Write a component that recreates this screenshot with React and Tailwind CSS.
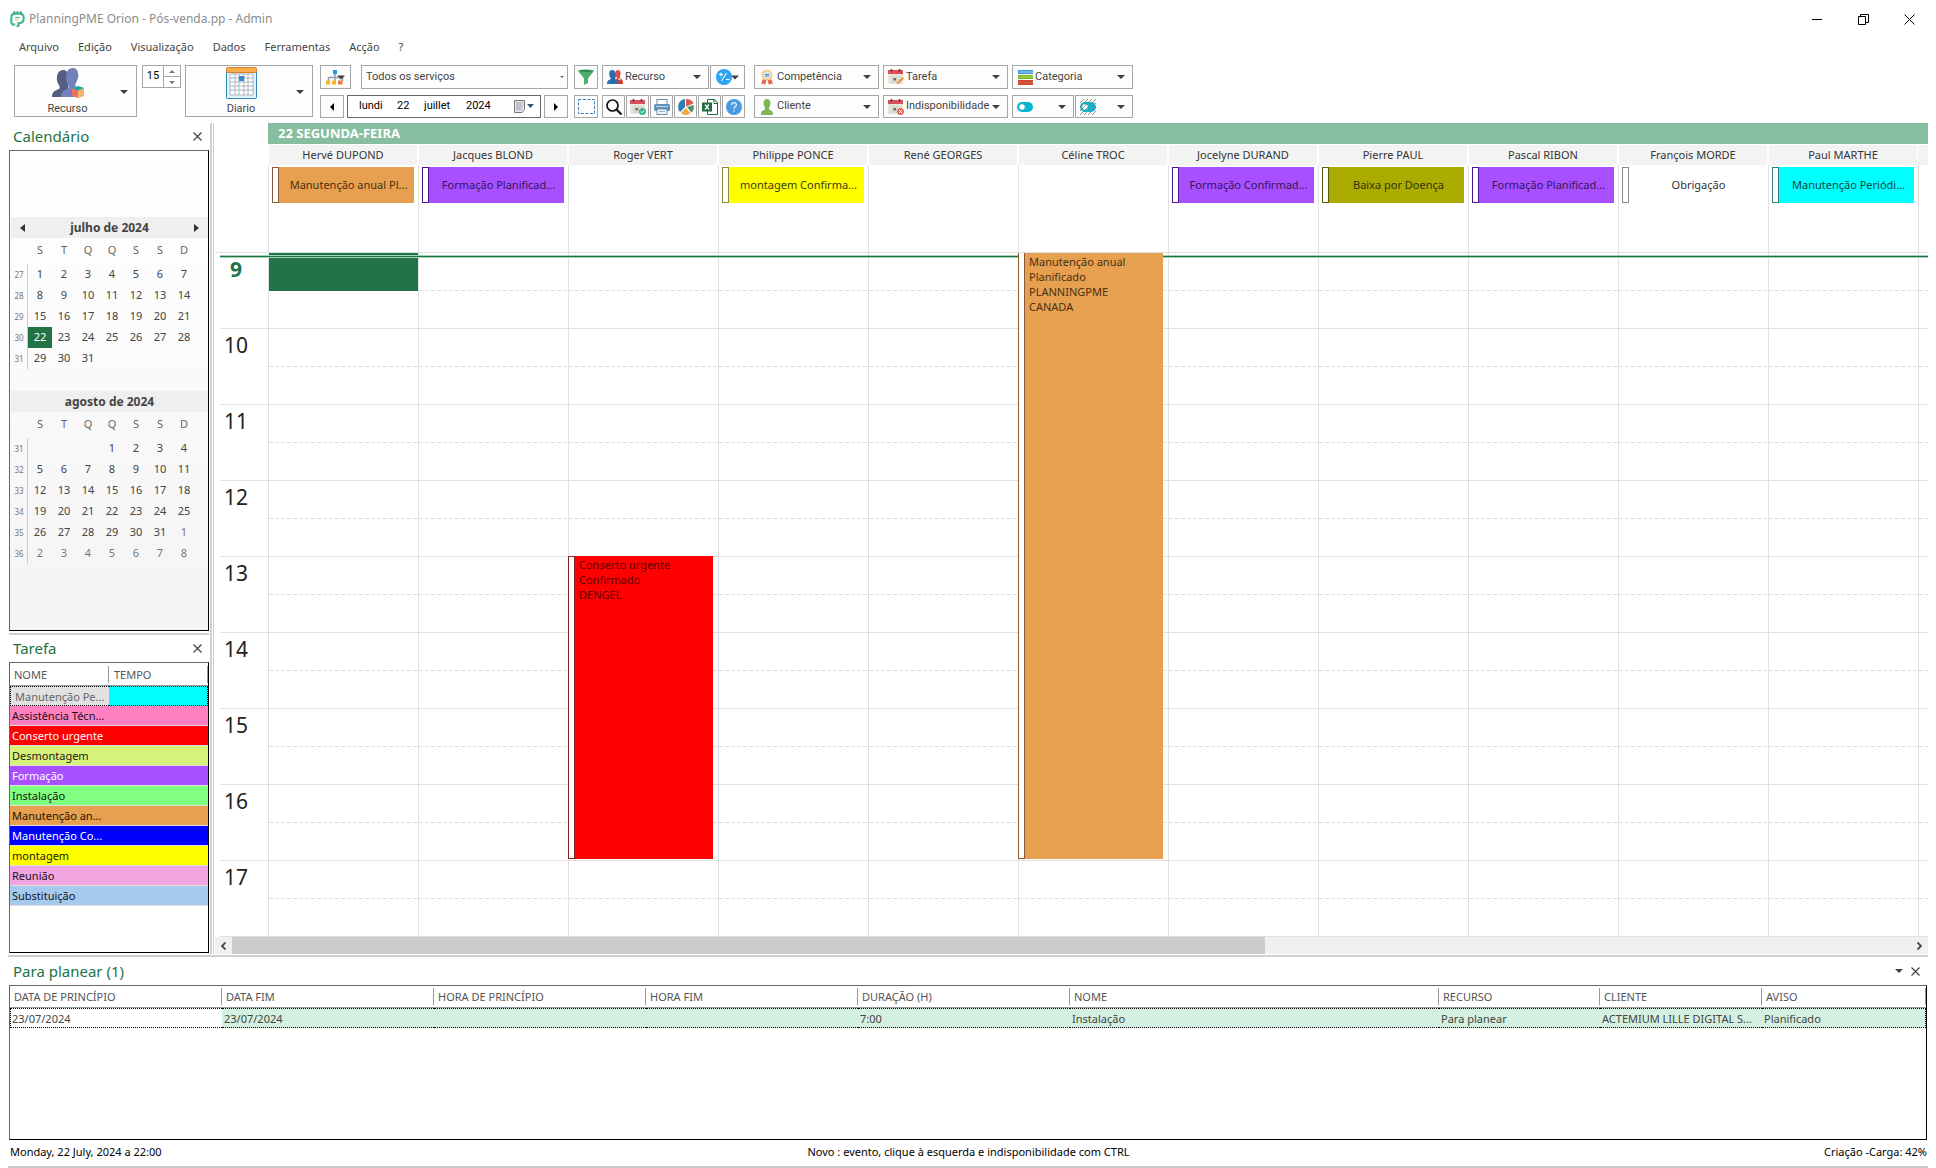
import React from 'react';

const resources = [
    { name: 'Hervé DUPOND', allDay: { text: 'Manutenção anual Pl...', body: 'bg-[#e6a050] text-[#4a3010]', mark: 'border-[#8a5a35]' } },
    { name: 'Jacques BLOND', allDay: { text: 'Formação Planificad...', body: 'bg-[#a850ff] text-[#34155a]', mark: 'border-[#4b1590]' } },
    { name: 'Roger VERT' },
    { name: 'Philippe PONCE', allDay: { text: 'montagem Confirma...', body: 'bg-[#ffff00] text-[#3a3a10]', mark: 'border-[#8a8a40]' } },
    { name: 'René GEORGES' },
    { name: 'Céline TROC' },
    { name: 'Jocelyne DURAND', allDay: { text: 'Formação Confirmad...', body: 'bg-[#a850ff] text-[#34155a]', mark: 'border-[#4b1590]' } },
    { name: 'Pierre PAUL', allDay: { text: 'Baixa por Doença', body: 'bg-[#acac00] text-[#33330a]', mark: 'border-[#5c5c10]' } },
    { name: 'Pascal RIBON', allDay: { text: 'Formação Planificad...', body: 'bg-[#a850ff] text-[#34155a]', mark: 'border-[#4b1590]' } },
    { name: 'François MORDE', allDay: { text: 'Obrigação', body: 'bg-white text-[#333333]', mark: 'border-[#8c8c8c]' } },
    { name: 'Paul MARTHE', allDay: { text: 'Manutenção Periódi...', body: 'bg-[#00ffff] text-[#104545]', mark: 'border-[#308080]' } },
];

const hours = [9, 10, 11, 12, 13, 14, 15, 16, 17];

const months = [
    {
        title: 'julho de 2024',
        arrows: true,
        weeks: [
            [27, 1, 2, 3, 4, 5, 6, 7],
            [28, 8, 9, 10, 11, 12, 13, 14],
            [29, 15, 16, 17, 18, 19, 20, 21],
            [30, 22, 23, 24, 25, 26, 27, 28],
            [31, 29, 30, 31, '', '', '', ''],
        ],
    },
    {
        title: 'agosto de 2024',
        weeks: [
            [31, '', '', '', 1, 2, 3, 4],
            [32, 5, 6, 7, 8, 9, 10, 11],
            [33, 12, 13, 14, 15, 16, 17, 18],
            [34, 19, 20, 21, 22, 23, 24, 25],
            [35, 26, 27, 28, 29, 30, 31, 1],
            [36, 2, 3, 4, 5, 6, 7, 8],
        ],
    },
];

const tasks = [
    { name: 'Assistência Técn...', style: 'bg-[#ff80c0] text-[#221018]' },
    { name: 'Conserto urgente', style: 'bg-[#ff0000] text-white' },
    { name: 'Desmontagem', style: 'bg-[#d7f27a] text-[#1c2010]' },
    { name: 'Formação', style: 'bg-[#a850ff] text-white' },
    { name: 'Instalação', style: 'bg-[#80ff80] text-[#102010]' },
    { name: 'Manutenção an...', style: 'bg-[#e6a050] text-[#201508]' },
    { name: 'Manutenção Co...', style: 'bg-[#0000ff] text-white' },
    { name: 'montagem', style: 'bg-[#ffff00] text-[#202008]' },
    { name: 'Reunião', style: 'bg-[#f0a5e0] text-[#201020]' },
    { name: 'Substituição', style: 'bg-[#a6c9ee] text-[#101820]' },
];

const planColumns = [
    { label: 'DATA DE PRINCÍPIO', width: 'w-[212px]', value: '23/07/2024' },
    { label: 'DATA FIM', width: 'w-[212px]', value: '23/07/2024' },
    { label: 'HORA DE PRINCÍPIO', width: 'w-[212px]', value: '' },
    { label: 'HORA FIM', width: 'w-[212px]', value: '' },
    { label: 'DURAÇÃO (H)', width: 'w-[212px]', value: '7:00' },
    { label: 'NOME', width: 'w-[369px]', value: 'Instalação' },
    { label: 'RECURSO', width: 'w-[161px]', value: 'Para planear' },
    { label: 'CLIENTE', width: 'w-[162px]', value: 'ACTEMIUM LILLE DIGITAL S...' },
    { label: 'AVISO', width: '', value: 'Planificado' },
];

/* Icons */

const Caret = ({ className = '' }) => (
    <svg className={`h-[4px] w-[8px] shrink-0 ${className}`} viewBox="0 0 8 4">
        <path d="M0 0h8L4 4z" fill="#404040" />
    </svg>
);

const CloseIcon = () => (
    <svg className="h-[9px] w-[9px]" viewBox="0 0 9 9">
        <path d="M.5.5l8 8M8.500.5l-8 8" stroke="#444" strokeWidth="1.2" />
    </svg>
);

const Logo = () => (
    <svg className="h-4 w-[15px]" viewBox="0 0 15 16">
        <path d="M5.200 13.600H3.400C1.800 13.600 1.300 12 1.300 10V6.500C1.300 4 2.800 2.700 5 2.700h4.500c2.600 0 4.200 2 4.200 4.600 0 2.800-1.800 4.700-4.400 4.700H8.600v2.300c0 .8-1.200 1-2 .6" fill="none" stroke="#41bb8b" strokeWidth="2.200" />
        <rect x="3.500" y="0" width="1.600" height="3" rx=".8" fill="#2f9d74" />
        <rect x="6.700" y="0" width="1.600" height="3" rx=".8" fill="#2f9d74" />
        <rect x="9.900" y="0" width="1.600" height="3" rx=".8" fill="#2f9d74" />
        <path d="M5 6.500h5" stroke="#3fb98a" strokeWidth="1" />
        <path d="M5 8.800h3.500" stroke="#e8b04a" strokeWidth="1" />
    </svg>
);

const PeopleIcon = () => (
    <svg className="h-8 w-8" viewBox="0 0 32 32">
        <path d="M0 29c0-5 2-6 7-8 1-1 1-2 0-4-3-3-3-12 1-14 3-2 8-1 8 4v22z" fill="#535f80" />
        <path d="M9 29c0-5 2-6 6-8 2-1 2-3 0-6-2-4-1-12 2-14 4-2 9-1 9 5 1 4-1 6-2 9-1 2-1 4 1 5 4 2 5 4 5 9z" fill="#7480bd" />
        <path d="M20 20l6 2v8l-6-2z" fill="#ef6f61" />
        <path d="M32 20l-6 2v8l6-2z" fill="#f9b26c" />
        <path d="M20 20l6-2 6 2-6 2.500z" fill="#12a89d" />
    </svg>
);

const BigCalendarIcon = () => (
    <svg className="h-8 w-[31px]" viewBox="0 0 31 32">
        <rect x=".5" y="4" width="30" height="27.500" rx="1" fill="#dff3fb" stroke="#2f88b8" />
        <rect x="4" y="7" width="23" height="21.500" fill="#fff" />
        <path d="M4 7h23M4 11h23M4 15h23M4 19h23M4 23h23M4 28h23M4 7v21M9 7v21M13 7v21M18 7v21M22 7v21M27 7v21" stroke="#a9b4bc" />
        <rect x="13" y="9" width="5" height="5" fill="#3d86cf" />
        <rect x=".5" y=".5" width="30" height="5" rx="1" fill="#f6ad4b" stroke="#d9822b" />
    </svg>
);

const OrgIcon = () => (
    <svg className="h-[15px] w-[20px]" viewBox="0 0 20 15">
        <path d="M9 4v3M2.500 11V7.500h14V11M9 7v4" fill="none" stroke="#90a0b0" strokeWidth="1.500" />
        <rect x="7" y="0" width="4" height="4" fill="#2196e3" />
        <rect x="0" y="10.500" width="4" height="4" fill="#f9b425" />
        <rect x="6" y="10.500" width="4" height="4" fill="#f9b425" />
        <rect x="12" y="10.500" width="4.500" height="4" fill="#f07c3c" />
        <path d="M11 5.500h8l-4 4z" fill="#404040" />
    </svg>
);

const FunnelIcon = () => (
    <svg className="h-4 w-4" viewBox="0 0 16 16">
        <path d="M0 2c0-2 16-2 16 0L10 9.500V14l-4 2V9.500z" fill="#4caf6d" />
        <ellipse cx="8" cy="2" rx="6.500" ry="1.100" fill="#2e8b50" />
    </svg>
);

const ResourceIcon = () => (
    <svg className="h-4 w-4" viewBox="0 0 16 16">
        <path d="M7 15c0-4 1-5 3-5l-1-3c0-3-1-6 2-6s3 4 2 7c0 1 0 2 1 2 2 1 2 2 2 5z" fill="#e04f42" />
        <path d="M9 10h6v5H9z" fill="#c43a3a" />
        <path d="M10 10l3-1 2 1-2 1.500z" fill="#f4b8a0" />
        <path d="M0 15c0-3 1-4 4-5C2 7 1 1 5 1s5 5 3 9c1.500 1 2.500 2 3 5z" fill="#2c6db0" />
    </svg>
);

const PercentIcon = () => (
    <svg className="h-4 w-[23px]" viewBox="0 0 23 16">
        <circle cx="8" cy="8" r="8" fill="#2ba4f4" />
        <path d="M3 5.500h4M5 3.500v4M10 10.500h3.500M5.500 12l5-8" stroke="#fff" strokeWidth="1.100" />
        <path d="M15 6.500h8l-4 4z" fill="#404040" />
    </svg>
);

const MarqueeIcon = () => (
    <svg className="h-[15px] w-[17px]" viewBox="0 0 17 15">
        <rect x=".5" y=".5" width="16" height="14" fill="none" stroke="#3c7fc0" strokeDasharray="3 1.500" />
    </svg>
);

const SearchIcon = () => (
    <svg className="h-4 w-4" viewBox="0 0 16 16">
        <circle cx="6.500" cy="6.500" r="5.500" fill="none" stroke="#111" strokeWidth="1.700" />
        <path d="M10.500 10.500L15.500 15.500" stroke="#111" strokeWidth="2.200" />
    </svg>
);

// One calendar sheet, with a different badge in the lower right corner
const SheetIcon = ({ badge }) => (
    <svg className="h-4 w-4" viewBox="0 0 16 16">
        <rect x="0" y="1" width="15" height="14" fill="#e9e6dc" />
        <rect x="0" y="1" width="15" height="4" fill="#d94f5c" />
        <path d="M3.500 0v2.500M11.500 0v2.500" stroke="#4a3b48" strokeWidth="1.500" />
        <path d="M2 8h11M2 10.500h11M2 13h11M5 6v8M8.500 6v8" stroke="#d3d0c6" />
        <rect x="5.500" y="9" width="2.500" height="2.500" fill="#6d6a66" />
        {badge === 'check' && (
            <>
                <circle cx="12.500" cy="12.500" r="3.500" fill="#3cb98c" />
                <path d="M11 12.500l1.200 1.200 2-2.200" fill="none" stroke="#fff" />
            </>
        )}
        {badge === 'pencil' && <path d="M8.500 15.500l.8-2.500L14.500 8l1.500 1.500-5 5z" fill="#e8963c" />}
        {badge === 'cross' && (
            <>
                <circle cx="12.500" cy="12.500" r="3.500" fill="#e8695c" />
                <path d="M11 11l3 3M14 11l-3 3" stroke="#fff" />
            </>
        )}
    </svg>
);

const PrinterIcon = () => (
    <svg className="h-4 w-4" viewBox="0 0 16 16">
        <rect x="3" y="0.500" width="10" height="6" fill="#fff" stroke="#6c8ba5" />
        <rect x="0" y="5" width="16" height="7" rx="1.500" fill="#5d93bf" />
        <path d="M2 7.500h12" stroke="#bcd6ea" />
        <rect x="3" y="10" width="10" height="5.500" fill="#f2f7fb" stroke="#6c8ba5" />
        <path d="M5 12.500h6" stroke="#8eb4d4" />
    </svg>
);

const PieIcon = () => (
    <svg className="h-4 w-4" viewBox="0 0 16 16">
        <path d="M7 8V0A8 8 0 0 0 2 13z" fill="#2d7fb8" />
        <path d="M8 9L3 14a8 8 0 0 0 9.500.500z" fill="#f2a73b" />
        <path d="M9 8l4.500 5.800A8 8 0 0 0 15.500 6z" fill="#4f8f6a" />
        <path d="M8 7.500l7.500-3A8 8 0 0 0 8 0z" fill="#e0564a" />
    </svg>
);

const ExcelIcon = () => (
    <svg className="h-4 w-4" viewBox="0 0 16 16">
        <path d="M5.500.5h7L15.500 4v11.500h-10z" fill="#fff" stroke="#1e6e42" />
        <path d="M12 .5V4.500h3.500" fill="none" stroke="#1e6e42" />
        <rect x="0" y="3.500" width="10" height="9" fill="#1e6e42" />
        <path d="M3 5.500l4 5M7 5.500l-4 5" stroke="#fff" strokeWidth="1.300" />
    </svg>
);

const HelpIcon = () => (
    <svg className="h-4 w-4" viewBox="0 0 16 16">
        <circle cx="8" cy="8" r="8" fill="#4a9ce0" />
        <path d="M5.800 6c0-3.200 4.600-3 4.600-.3C10.400 7.500 8 7.500 8 9.800M8 11.300v1.400" fill="none" stroke="#e8f3fc" strokeWidth="1.300" />
    </svg>
);

const MedalIcon = () => (
    <svg className="h-4 w-4" viewBox="0 0 16 16">
        <path d="M4 10l-2 5 2.500-.5L6 16l1.500-5zM12 10l2 5-2.500-.5L10 16l-1.500-5z" fill="#e5604a" />
        <circle cx="8" cy="6" r="5.500" fill="#f3cf8e" />
        <circle cx="8" cy="6" r="3.500" fill="#dbe8f4" />
        <path d="M6 5.500h4M6 7h4" stroke="#5b86b8" />
    </svg>
);

const ClientIcon = () => (
    <svg className="mr-[2px] h-4 w-3" viewBox="0 0 12 16">
        <path d="M0 16c0-4 1-4 4-5.500V9C2 6 1.500 0 6 0s4 6 2 9v1.500c3 1.500 4 1.500 4 5.500z" fill="#7cb852" />
    </svg>
);

const StackIcon = () => (
    <svg className="h-[15px] w-[15px]" viewBox="0 0 15 15">
        <rect width="15" height="4" fill="#3f97d6" />
        <path d="M1 2h14" stroke="#a9d3ee" />
        <rect y="5" width="15" height="4" fill="#7ab51d" />
        <path d="M1 7h14" stroke="#c0dd77" />
        <rect y="10" width="15" height="5" fill="#d9472f" />
        <path d="M1 12.500h14" stroke="#b0705c" />
    </svg>
);

const ToggleIcon = ({ hatched }) => (
    <svg className="h-4 w-4" viewBox="0 0 16 16">
        <rect x="0" y="3" width="16" height="10" rx="5" fill="#08b6d2" />
        <circle cx="5" cy="8" r="2.800" fill="#fff" />
        {hatched && <path d="M0 4l4-4M0 8l8-8M0 12L12 0M0 16L16 0M4 16L16 4M8 16l8-8M12 16l4-4" stroke="#6f8a8a" strokeWidth=".9" />}
    </svg>
);

const DateDropIcon = () => (
    <svg className="h-[13px] w-[21px]" viewBox="0 0 21 13">
        <path d="M.5.500h10v9l-2.500 3H.5z" fill="#e4e4ea" stroke="#777" />
        <path d="M2 3h7M2 5h7M2 7h7M2 9h6M3.500 2v9M6 2v9" stroke="#a2a2b4" strokeWidth=".7" />
        <path d="M13 4h7l-3.500 4z" fill="#3c4f78" />
    </svg>
);

/* Toolbar parts */

const toolBox = 'flex items-center border border-[#a6a6a6] bg-[#fdfdfd]';

const IconButton = ({ label, className, children }) => (
    <button type="button" aria-label={label} className={`${toolBox} justify-center ${className}`}>
        {children}
    </button>
);

const ToolSelect = ({ label, icon, width, height = 'h-[23px]', text = true }) => (
    <div className={`${toolBox} relative ${width} ${height}`}>
        <span className="flex w-5 shrink-0 justify-end">{icon}</span>
        <select aria-label={label} className="absolute inset-0 appearance-none pl-[22px] text-[11px] text-[#444444] outline-none">
            <option>{text ? label : ''}</option>
        </select>
        <Caret className="absolute right-[7px]" />
    </div>
);

const Toolbar = () => (
    <div className="flex h-[58px] items-start pl-[14px] font-['Roboto',sans-serif] text-[11px] text-[#444444]">
        <button type="button" className={`${toolBox} relative h-[52px] w-[123px] flex-col justify-between pt-[2px] pr-[16px] leading-[15px]`}>
            <PeopleIcon />
            Recurso
            <Caret className="absolute top-[24px] right-[8px]" />
        </button>

        <div className="ml-[5px] flex h-[23px] w-[39px] border border-[#a6a6a6]">
            <input aria-label="Intervalo" defaultValue="15" className="w-[21px] border-r border-[#a6a6a6] text-center text-black outline-none" />
            <div className="flex flex-1 flex-col divide-y divide-[#a6a6a6]">
                <button type="button" aria-label="Aumentar" className="flex flex-1 items-center justify-center">
                    <svg className="h-[3px] w-[6px]" viewBox="0 0 6 3"><path d="M0 3h6L3 0z" fill="#777" /></svg>
                </button>
                <button type="button" aria-label="Diminuir" className="flex flex-1 items-center justify-center">
                    <svg className="h-[3px] w-[6px]" viewBox="0 0 6 3"><path d="M0 0h6L3 3z" fill="#777" /></svg>
                </button>
            </div>
        </div>

        <button type="button" className={`${toolBox} relative ml-1 h-[52px] w-[128px] flex-col justify-between pt-px pr-[16px] leading-[15px]`}>
            <BigCalendarIcon />
            Diario
            <Caret className="absolute top-[24px] right-[8px]" />
        </button>

        {/* Service and date */}
        <div className="ml-[7px] flex w-[248px] flex-col gap-[6px]">
            <div className="flex justify-between">
                <IconButton label="Organização" className="h-6 w-[31px]"><OrgIcon /></IconButton>
                <div className={`${toolBox} relative h-6 w-[207px]`}>
                    <select aria-label="Serviços" className="h-full w-full appearance-none pl-1 outline-none">
                        <option>Todos os serviços</option>
                    </select>
                    <svg className="absolute right-[3px] h-[2px] w-1" viewBox="0 0 4 2"><path d="M0 0h4L2 2z" fill="#666" /></svg>
                </div>
            </div>
            <div className="flex justify-between">
                <IconButton label="Dia anterior" className="h-[23px] w-6">
                    <svg className="h-2 w-1" viewBox="0 0 4 8"><path d="M4 0v8L0 4z" /></svg>
                </IconButton>
                <div className="flex h-[23px] w-[194px] items-center border border-[#666666] pl-[11px] text-black">
                    <input aria-label="Dia da semana" defaultValue="lundi" className="w-[38px] outline-none" />
                    <input aria-label="Dia" defaultValue="22" className="w-[27px] outline-none" />
                    <input aria-label="Mês" defaultValue="juillet" className="w-[42px] outline-none" />
                    <input aria-label="Ano" defaultValue="2024" className="w-[48px] outline-none" />
                    <button type="button" aria-label="Abrir calendário"><DateDropIcon /></button>
                </div>
                <IconButton label="Dia seguinte" className="h-[23px] w-6">
                    <svg className="h-2 w-1" viewBox="0 0 4 8"><path d="M0 0v8l4-4z" /></svg>
                </IconButton>
            </div>
        </div>

        {/* Filter and tools */}
        <div className="ml-[6px] flex flex-col gap-[6px]">
            <div className="flex">
                <IconButton label="Filtro" className="h-6 w-6"><FunnelIcon /></IconButton>
                <div className="ml-1 flex gap-px">
                    <ToolSelect label="Recurso" icon={<ResourceIcon />} width="w-[107px]" height="h-6" />
                    <IconButton label="Cálculo" className="h-6 w-[35px]"><PercentIcon /></IconButton>
                </div>
            </div>
            <div className="flex">
                <IconButton label="Seleção" className="h-[23px] w-6"><MarqueeIcon /></IconButton>
                <div className="ml-1 flex gap-px">
                    <IconButton label="Procurar" className="h-[23px] w-[23px]"><SearchIcon /></IconButton>
                    <IconButton label="Marcações" className="h-[23px] w-[23px]"><SheetIcon badge="check" /></IconButton>
                    <IconButton label="Imprimir" className="h-[23px] w-[23px]"><PrinterIcon /></IconButton>
                    <IconButton label="Estatísticas" className="h-[23px] w-[23px]"><PieIcon /></IconButton>
                    <IconButton label="Exportar" className="h-[23px] w-[23px]"><ExcelIcon /></IconButton>
                    <IconButton label="Ajuda" className="h-[23px] w-[23px]"><HelpIcon /></IconButton>
                </div>
            </div>
        </div>

        {/* Quick filters */}
        <div className="ml-[9px] flex flex-col gap-[6px]">
            <div className="flex gap-1">
                <ToolSelect label="Competência" icon={<MedalIcon />} width="w-[125px]" height="h-6" />
                <ToolSelect label="Tarefa" icon={<SheetIcon badge="pencil" />} width="w-[125px]" height="h-6" />
                <ToolSelect label="Categoria" icon={<StackIcon />} width="w-[121px]" height="h-6" />
            </div>
            <div className="flex gap-1">
                <ToolSelect label="Cliente" icon={<ClientIcon />} width="w-[125px]" />
                <ToolSelect label="Indisponibilidade" icon={<SheetIcon badge="cross" />} width="w-[125px]" />
                <div className="flex gap-px">
                    <ToolSelect label="Ativos" icon={<ToggleIcon />} width="w-[62px]" text={false} />
                    <ToolSelect label="Inativos" icon={<ToggleIcon hatched />} width="w-[58px]" text={false} />
                </div>
            </div>
        </div>
    </div>
);

/* Side panels */

const PanelTitle = ({ title, height = 'h-[27px]', children }) => (
    <div className={`flex items-center justify-between pr-[7px] pl-[4px] ${height}`}>
        <h2 className="text-[15px] text-[#217346]">{title}</h2>
        <div className="flex items-center gap-2">
            {children}
            <button type="button" aria-label={`Fechar ${title}`}><CloseIcon /></button>
        </div>
    </div>
);

const Month = ({ month }) => (
    <div className="mb-[22px]">
        <div className="flex h-[21px] items-center justify-between bg-[#efefef] px-[9px] text-[12px] font-bold text-[#444444]">
            {month.arrows && (
                <button type="button" aria-label="Mês anterior">
                    <svg className="h-2 w-[5px]" viewBox="0 0 5 8"><path d="M5 0v8L0 4z" fill="#333" /></svg>
                </button>
            )}
            <span className="flex-1 text-center">{month.title}</span>
            {month.arrows && (
                <button type="button" aria-label="Mês seguinte">
                    <svg className="h-2 w-[5px]" viewBox="0 0 5 8"><path d="M0 0v8l5-4z" fill="#333" /></svg>
                </button>
            )}
        </div>
        <table className="table-fixed border-separate border-spacing-0 text-center text-[11px] text-[#444444]">
            <thead>
                <tr className="h-[26px] text-[#666666]">
                    <th className="w-[17px]"></th>
                    {['S', 'T', 'Q', 'Q', 'S', 'S', 'D'].map((day, i) => (
                        <th key={i} className="w-6 p-0 pb-[2px] font-normal">{day}</th>
                    ))}
                </tr>
            </thead>
            <tbody>
                {month.weeks.map((week) => (
                    <tr key={week[0]} className="h-[21px]">
                        {week.map((day, i) => {
                            const selected = month.arrows && day === 22;
                            const faded = !month.arrows && ((week[0] === 36 && i > 0) || (week[0] === 35 && i === 7));
                            if (i === 0) {
                                return <td key={i} className="border-r border-[#cccccc] p-0 text-[8px] text-[#777777]">{day}</td>;
                            }
                            return (
                                <td key={i} className={`p-0 ${selected ? 'bg-[#217346] text-white' : ''} ${faded ? 'text-[#777777]' : ''}`}>{day}</td>
                            );
                        })}
                    </tr>
                ))}
            </tbody>
        </table>
    </div>
);

const Sidebar = () => (
    <aside className="flex w-[201px] shrink-0 flex-col pb-px pl-px">
        <PanelTitle title="Calendário" />
        <div className="flex-1 border border-t-[#666666] border-r-black border-b-black border-l-[#666666] bg-linear-to-b from-white to-[#f4f4f4] pt-[66px] pl-px">
            {months.map((month) => <Month key={month.title} month={month} />)}
        </div>
        <div className="mt-[2px] h-[2px] bg-[#d0d0d0]"></div>

        <PanelTitle title="Tarefa" />
        <div className="h-[291px] border border-t-[#666666] border-r-black border-b-black border-l-[#666666]">
            <table className="w-full table-fixed border-separate border-spacing-0 text-[11px] leading-[17px]">
                <thead>
                    <tr className="h-[23px] text-left text-[#555555]">
                        <th className="w-[99px] border-b border-[#999999] py-0 pl-1 font-normal">
                            <div className="border-r border-[#999999]">NOME</div>
                        </th>
                        <th className="border-b border-[#999999] py-0 pl-[5px] font-normal">
                            <div className="border-r border-[#999999]">TEMPO</div>
                        </th>
                    </tr>
                </thead>
                <tbody>
                    <tr className="h-[20px]">
                        <td className="border border-r-0 border-dotted border-black bg-[#e1e1e1] py-0 pl-1 whitespace-nowrap text-[#666666]">Manutenção Pe...</td>
                        <td className="border border-l-0 border-dotted border-black bg-[#00ffff] p-0"></td>
                    </tr>
                    {tasks.map((task) => (
                        <tr key={task.name} className={`h-5 ${task.style}`}>
                            <td className="border-b border-[#e0e0e0] py-0 pl-[2px] whitespace-nowrap">{task.name}</td>
                            <td className="border-b border-[#e0e0e0] p-0"></td>
                        </tr>
                    ))}
                </tbody>
            </table>
        </div>
    </aside>
);

/* Schedule */

const TimedEvent = ({ lines, className, markColor, bodyColor }) => (
    <div className={`absolute right-[5px] -left-px z-20 flex ${className}`}>
        <div className={`w-[7px] shrink-0 border bg-white ${markColor}`}></div>
        <div className={`flex-1 pt-px pl-1 text-[11px] leading-[15px] ${bodyColor}`}>
            {lines.map((line) => <p key={line}>{line}</p>)}
        </div>
    </div>
);

const Schedule = () => (
    <section className="relative flex min-w-0 flex-1 flex-col">
        <div className="ml-[53px] h-[21px] bg-[#86be9f] pl-[10px] text-[13px] leading-[21px] font-bold text-white">
            22 SEGUNDA-FEIRA
        </div>

        {/* Resource names and all-day events */}
        <div className="flex overflow-hidden border-b border-[#e0e0e0] pl-[53px]">
            {resources.map((res) => (
                <div key={res.name} className="h-[108px] w-[150px] shrink-0">
                    <div className="mt-px h-5 border-x border-white bg-[#f3f3f3] text-center text-[11px] leading-5 text-[#333333]">
                        {res.name}
                    </div>
                    <div className="h-[87px] border-l border-[#e0e0e0] pt-[2px] pr-[4px] pl-[3px]">
                        {res.allDay && (
                            <div className="flex h-9">
                                <div className={`w-[7px] border bg-white ${res.allDay.mark}`}></div>
                                <div className={`flex-1 pl-1 text-center text-[11px] leading-9 whitespace-nowrap ${res.allDay.body}`}>
                                    {res.allDay.text}
                                </div>
                            </div>
                        )}
                    </div>
                </div>
            ))}
            <div className="h-[108px] flex-1">
                <div className="mt-px h-5 bg-[#f3f3f3]"></div>
                <div className="h-[87px] border-l border-[#e0e0e0]"></div>
            </div>
        </div>

        {/* Hour rows */}
        <div className="relative flex overflow-hidden">
            <div className="w-[53px] shrink-0 pl-[5px]">
                {hours.map((hour) => (
                    <div
                        key={hour}
                        className={`h-[76px] border-b border-[#e0e0e0] pr-[16px] text-center text-[21px] leading-[32px] ${hour === 9 ? 'font-bold text-[#217346]' : 'text-[#222222]'}`}
                    >
                        {hour}
                    </div>
                ))}
            </div>
            {[...resources, { name: '' }].map((res, i) => (
                <div key={i} className={`relative border-l border-[#e0e0e0] ${res.name ? 'w-[150px] shrink-0' : 'min-w-0 flex-1'}`}>
                    {hours.map((hour) => (
                        <div key={hour} className="h-[76px] border-b border-[#e0e0e0]">
                            <div className={`h-[37px] ${i === 0 && hour === 9 ? 'bg-[#217346]' : ''}`}></div>
                            <div className={`h-px ${i === 0 && hour === 9 ? 'bg-[#217346]' : 'bg-[repeating-linear-gradient(90deg,#e0e0e0_0_4px,transparent_4px_6px)]'}`}></div>
                        </div>
                    ))}
                    {res.name === 'Roger VERT' && (
                        <TimedEvent
                            lines={['Conserto urgente', 'Confirmado', 'DENGEL']}
                            className="top-[303px] h-[303px]"
                            markColor="border-[#8a2020]"
                            bodyColor="bg-[#ff0000] text-[#5c0000]"
                        />
                    )}
                    {res.name === 'Céline TROC' && (
                        <TimedEvent
                            lines={['Manutenção anual', 'Planificado', 'PLANNINGPME', 'CANADA']}
                            className="top-0 h-[606px]"
                            markColor="border-t-0 border-[#8a5a35]"
                            bodyColor="bg-[#e6a050] text-[#4a3010]"
                        />
                    )}
                </div>
            ))}
            {/* Current time */}
            <div className="absolute top-[2px] right-0 left-[5px] z-10 h-[3px] border-y border-[#9fd3b4] bg-[#217346]"></div>
        </div>

        <div className="flex h-[17px] bg-[#f0f0f0]">
            <button type="button" aria-label="Deslocar à esquerda" className="flex w-[17px] items-center justify-center">
                <svg className="h-2 w-[5px]" viewBox="0 0 5 8"><path d="M4.500.5L1 4l3.500 3.500" fill="none" stroke="#444" strokeWidth="1.800" /></svg>
            </button>
            <div className="flex-1"><div className="h-full w-8/13 bg-[#cdcdcd]"></div></div>
            <button type="button" aria-label="Deslocar à direita" className="flex w-[17px] items-center justify-center">
                <svg className="h-2 w-[5px]" viewBox="0 0 5 8"><path d="M.5.5L4 4 .5 7.500" fill="none" stroke="#444" strokeWidth="1.800" /></svg>
            </button>
        </div>
    </section>
);

const PlanTable = () => (
    <section className="flex flex-1 flex-col">
        <PanelTitle title="Para planear (1)" height="h-[28px]">
            <button type="button" aria-label="Opções"><Caret /></button>
        </PanelTitle>
        <div className="flex-1 border border-t-[#666666] border-r-black border-b-black border-l-[#666666]">
            <table className="w-full table-fixed border-separate border-spacing-0 text-left text-[11px] leading-[17px] text-[#444444]">
                <thead>
                    <tr className="h-[22px]">
                        {planColumns.map((col) => (
                            <th key={col.label} className={`border-b border-[#999999] py-0 pl-1 font-normal text-[#555555] ${col.width}`}>
                                <div className="border-r border-[#999999]">{col.label}</div>
                            </th>
                        ))}
                    </tr>
                </thead>
                <tbody>
                    <tr className="h-5">
                        {planColumns.map((col, i) => (
                            <td
                                key={col.label}
                                className={`border-y border-dotted border-black py-0 whitespace-nowrap ${i === 0 ? 'border-l pl-px' : 'bg-[#d4f0e0] pl-[2px]'} ${i === 8 ? 'border-r' : ''}`}
                            >
                                {col.value}
                            </td>
                        ))}
                    </tr>
                </tbody>
            </table>
        </div>
    </section>
);

const App = () => (
    <div className="flex min-h-screen flex-col bg-white font-['Noto_Sans',sans-serif] text-[11px]">
        <header className="flex h-9 items-center pt-[2px] pr-[21px] pl-[10px]">
            <Logo />
            <h1 className="ml-[4px] flex-1 text-[12px] text-[#8c8c8c]">PlanningPME Orion - Pós-venda.pp - Admin</h1>
            <div className="flex items-center gap-[35px]">
                <button type="button" aria-label="Minimizar">
                    <svg className="h-[11px] w-[11px]" viewBox="0 0 11 11"><path d="M0 5.500h10" stroke="#000" /></svg>
                </button>
                <button type="button" aria-label="Restaurar">
                    <svg className="h-[11px] w-[11px]" viewBox="0 0 11 11"><path d="M.5 2.500h7v8h-7zM2.500 2.500v-2h8v8h-3" fill="none" stroke="#000" /></svg>
                </button>
                <button type="button" aria-label="Fechar">
                    <svg className="h-[11px] w-[11px]" viewBox="0 0 11 11"><path d="M.5.5l10 10M10.500.5l-10 10" stroke="#000" /></svg>
                </button>
            </div>
        </header>

        <nav className="flex h-[29px] items-start gap-[19px] pt-[3px] pl-[19px] text-[11px] text-[#444444]">
            {['Arquivo', 'Edição', 'Visualização', 'Dados', 'Ferramentas', 'Acção', '?'].map((item) => (
                <button key={item} type="button">{item}</button>
            ))}
        </nav>

        <Toolbar />

        <main className="flex flex-1 flex-col pr-2 pl-2">
            <div className="flex">
                <Sidebar />
                <div className="mx-px w-[4px] shrink-0 border-r border-l-2 border-[#d0d0d0]"></div>
                <Schedule />
            </div>
            <div className="mt-px h-[2px] bg-[#d0d0d0]"></div>
            <div className="flex flex-1 flex-col pr-px pl-px">
                <PlanTable />
            </div>
        </main>

        <footer className="mx-2 grid h-[28px] grid-cols-3 border-b-2 border-[#c8c8c8] pr-px pl-[2px] text-[11px] leading-[24px] text-black">
            <span>Monday, 22 July, 2024 a 22:00</span>
            <span className="text-center">Novo : evento, clique à esquerda e indisponibilidade com CTRL</span>
            <span className="text-right">Criação -Carga: 42%</span>
        </footer>
    </div>
);

export default App;
